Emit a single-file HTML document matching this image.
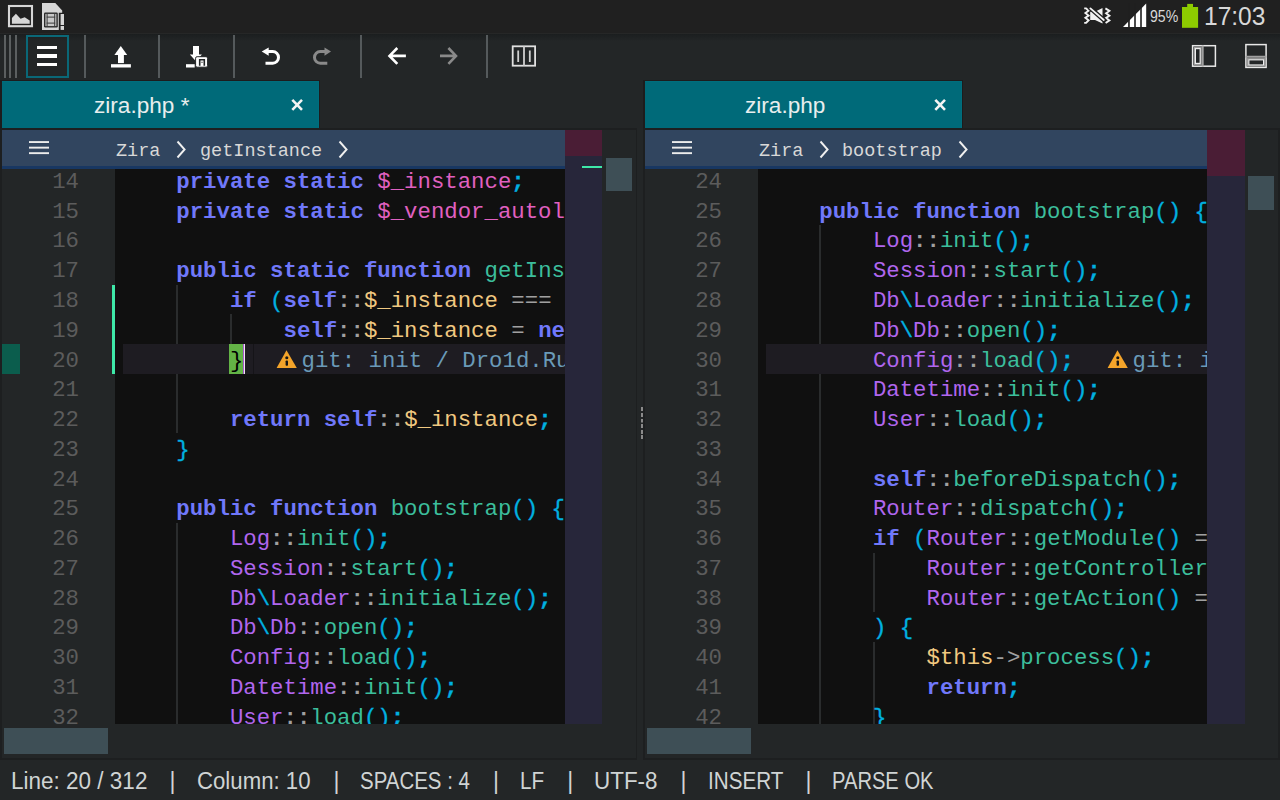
<!DOCTYPE html>
<html><head><meta charset="utf-8">
<style>
*{margin:0;padding:0;box-sizing:border-box}
html,body{width:1280px;height:800px;overflow:hidden;background:#232627;font-family:"Liberation Sans",sans-serif}
.abs{position:absolute}
#sb{position:absolute;left:0;top:0;width:1280px;height:33px;background:#202020}
.sep{position:absolute;top:35px;width:2px;height:43px;background:#555a5c}
.grip{position:absolute;top:35px;width:2px;height:43px;background:#5b5f60}
.tab{position:absolute;top:81px;width:317px;height:47px;background:#006a79;box-shadow:inset -1px 1px 0 #006e7d}
.tabt{position:absolute;font-size:22.6px;line-height:26px;color:#e8eeee;white-space:pre}
.frame{position:absolute;top:128px;height:632px;background:#1d1f20}
.bc{position:absolute;top:130px;height:36px;background:#31455f}
.bcl{position:absolute;top:166px;height:3px;background:#183762}
.bct{position:absolute;font-family:"Liberation Mono",monospace;font-size:18.5px;line-height:22px;color:#d8d8d8;white-space:pre}
.gut{position:absolute;background:#232627}
.code{position:absolute;background:#101010}
.ln{position:absolute;left:7.7px;padding-top:2.4px;height:29.77px;line-height:29.77px;font-family:"Liberation Mono",monospace;font-size:22.33px;white-space:pre;color:#ccc}
.num{position:absolute;right:36px;padding-top:2.4px;height:29.77px;line-height:29.77px;font-family:"Liberation Mono",monospace;font-size:22.33px;white-space:pre;color:#5c5c5c}
.ann{position:absolute;font-family:"Liberation Mono",monospace;font-size:22.33px;line-height:29.77px;white-space:pre;color:#6a9ab8}
.kw{color:#7078fa;font-weight:bold}
.var{color:#e060c0}
.fn{color:#3cbe9c}
.prop{color:#f0c880}
.op{color:#a0a0a0}
.pun{color:#00b0e0;-webkit-text-stroke:0.35px #00b0e0}
.b{font-weight:bold}
.cls{color:#b066ee}
.brk{color:#000}
.guide{position:absolute;width:2px;background:#2a2c2d}
.mm{position:absolute;background:#27263a}
.mmh{position:absolute;background:#4a1d35}
.vs{position:absolute;background:#232627}
.thumb{position:absolute;background:#3e4f56}
.hl{position:absolute;background:#1e1c22}
#st{position:absolute;left:0;top:760px;width:1280px;height:40px;background:#232627}
.stt{position:absolute;top:767px;font-size:23px;line-height:28px;color:#d0d4d4;white-space:pre}
</style></head><body>
<div id="sb"></div>
<div class="abs" style="left:0;top:33px;width:1280px;height:1px;background:#262727"></div>
<div class="abs" style="left:0;top:34px;width:1280px;height:7px;background:linear-gradient(#1b1e1f,#232627)"></div>

<div class="grip" style="left:4px"></div>
<div class="grip" style="left:9px"></div>
<div class="grip" style="left:15px"></div>
<div class="abs" style="left:26px;top:35px;width:43px;height:43px;border:2px solid #0a6878"></div>
<div class="abs" style="left:37px;top:46px;width:20px;height:3px;background:#fff"></div>
<div class="abs" style="left:37px;top:54px;width:20px;height:4px;background:#fff"></div>
<div class="abs" style="left:37px;top:63px;width:20px;height:3px;background:#fff"></div>
<div class="sep" style="left:84px"></div>
<div class="sep" style="left:158px"></div>
<div class="sep" style="left:233px"></div>
<div class="sep" style="left:359.5px"></div>
<div class="sep" style="left:486px"></div>

<div class="abs" style="left:0;top:80px;width:320px;height:48px;background:#1d1c1d"></div>
<div class="abs" style="left:643px;top:80px;width:320px;height:48px;background:#1d1c1d"></div>
<div class="tab" style="left:2px"></div>
<div class="tab" style="left:645px"></div>
<div class="tabt" style="left:94px;top:93px">zira.php *</div>
<div class="tabt" style="left:745px;top:93px">zira.php</div>

<!-- left pane -->
<div class="frame" style="left:0;width:637px"></div>
<div class="gut" style="left:2px;top:130px;width:633.5px;height:627.5px"></div>
<div class="code" style="left:115px;top:169px;width:450px;height:555px"></div>
<div class="bc" style="left:2px;width:563px"></div>
<div class="bcl" style="left:2px;width:563px"></div>
<div class="bct" style="left:116px;top:140.6px">Zira</div>
<div class="bct" style="left:200px;top:140.6px">getInstance</div>
<div class="mmh" style="left:565px;top:130px;width:37px;height:26px"></div>
<div class="mm" style="left:565px;top:156px;width:37px;height:568px"></div>
<div class="thumb" style="left:606px;top:158px;width:26px;height:33px"></div>
<div class="abs" style="left:582px;top:166px;width:20px;height:2px;background:#3ee8a8"></div>
<div class="thumb" style="left:4px;top:728px;width:104px;height:26px"></div>

<!-- right pane -->
<div class="frame" style="left:643px;width:637px"></div>
<div class="gut" style="left:645px;top:130px;width:633px;height:627.5px"></div>
<div class="code" style="left:758px;top:169px;width:449px;height:555px"></div>
<div class="bc" style="left:645px;width:562px"></div>
<div class="bcl" style="left:645px;width:562px"></div>
<div class="bct" style="left:759px;top:140.6px">Zira</div>
<div class="bct" style="left:842px;top:140.6px">bootstrap</div>
<div class="mmh" style="left:1207px;top:130px;width:38px;height:46px"></div>
<div class="mm" style="left:1207px;top:176px;width:38px;height:548px"></div>
<div class="thumb" style="left:1248px;top:176px;width:26px;height:34px"></div>
<div class="thumb" style="left:647px;top:728px;width:104px;height:26px"></div>

<!-- left code -->
<div class="abs" style="left:0;top:169px;width:565px;height:555px;overflow:hidden">
 <div class="abs" style="left:0;top:-169px;width:565px;height:800px">
  <div class="abs" style="left:2px;top:344.12px;width:18px;height:29.77px;background:#0b5d4d"></div>
  <div class="abs" style="left:112px;top:284.58px;width:3px;height:89.31px;background:#3ee8a8"></div>
  <div class="guide" style="left:176px;top:284.58px;height:148.85px"></div>
  <div class="guide" style="left:230px;top:314.35px;height:29.77px"></div>
  <div class="guide" style="left:176px;top:522.74px;height:201.26px"></div>
  <div class="hl" style="left:123px;top:344.12px;width:442px;height:29.77px"></div>
  <div class="abs" style="left:228.9px;top:344.12px;width:14.2px;height:29.77px;background:#63b346"></div>
  <div class="abs" style="left:243.1px;top:344.12px;width:1.3px;height:29.77px;background:#a855d0"></div>
  <div class="abs" style="left:244.4px;top:344.12px;width:0.9px;height:29.77px;background:#f0e8f0"></div>
  <div class="abs" style="left:253.2px;top:344.12px;width:0.9px;height:29.77px;background:#151418"></div>
  <div class="abs" style="left:0;top:0;width:115px;height:800px">
<div class="num" style="top:165.50px">14</div>
<div class="num" style="top:195.27px">15</div>
<div class="num" style="top:225.04px">16</div>
<div class="num" style="top:254.81px">17</div>
<div class="num" style="top:284.58px">18</div>
<div class="num" style="top:314.35px">19</div>
<div class="num" style="top:344.12px">20</div>
<div class="num" style="top:373.89px">21</div>
<div class="num" style="top:403.66px">22</div>
<div class="num" style="top:433.43px">23</div>
<div class="num" style="top:463.20px">24</div>
<div class="num" style="top:492.97px">25</div>
<div class="num" style="top:522.74px">26</div>
<div class="num" style="top:552.51px">27</div>
<div class="num" style="top:582.28px">28</div>
<div class="num" style="top:612.05px">29</div>
<div class="num" style="top:641.82px">30</div>
<div class="num" style="top:671.59px">31</div>
<div class="num" style="top:701.36px">32</div>
  </div>
  <div class="abs" style="left:115px;top:0;width:450px;height:800px">
<div class="ln" style="top:165.50px">    <span class="kw">private</span> <span class="kw">static</span> <span class="var">$_instance</span><span class="pun"><b class="b">;</b></span></div>
<div class="ln" style="top:195.27px">    <span class="kw">private</span> <span class="kw">static</span> <span class="var">$_vendor_autoloader</span><span class="pun"><b class="b">;</b></span></div>
<div class="ln" style="top:254.81px">    <span class="kw">public</span> <span class="kw">static</span> <span class="kw">function</span> <span class="fn">getInstance</span><span class="pun">()</span></div>
<div class="ln" style="top:284.58px">        <span class="kw">if</span> <span class="pun">(</span><span class="kw">self</span><span class="op b">::</span><span class="prop">$_instance</span> <span class="op">===</span> <span class="kw">null</span><span class="pun">)</span></div>
<div class="ln" style="top:314.35px">            <span class="kw">self</span><span class="op b">::</span><span class="prop">$_instance</span> <span class="op">=</span> <span class="kw">new</span> <span class="kw">self</span><span class="pun">()<b class="b">;</b></span></div>
<div class="ln" style="top:344.12px">        <span class="brk">}</span></div>
<div class="ln" style="top:403.66px">        <span class="kw">return</span> <span class="kw">self</span><span class="op b">::</span><span class="prop">$_instance</span><span class="pun"><b class="b">;</b></span></div>
<div class="ln" style="top:433.43px">    <span class="pun">}</span></div>
<div class="ln" style="top:492.97px">    <span class="kw">public</span> <span class="kw">function</span> <span class="fn">bootstrap</span><span class="pun">()</span> <span class="pun">{</span></div>
<div class="ln" style="top:522.74px">        <span class="cls">Log</span><span class="op b">::</span><span class="fn">init</span><span class="pun">()<b class="b">;</b></span></div>
<div class="ln" style="top:552.51px">        <span class="cls">Session</span><span class="op b">::</span><span class="fn">start</span><span class="pun">()<b class="b">;</b></span></div>
<div class="ln" style="top:582.28px">        <span class="cls">Db</span><span class="pun">\</span><span class="cls">Loader</span><span class="op b">::</span><span class="fn">initialize</span><span class="pun">()<b class="b">;</b></span></div>
<div class="ln" style="top:612.05px">        <span class="cls">Db</span><span class="pun">\</span><span class="cls">Db</span><span class="op b">::</span><span class="fn">open</span><span class="pun">()<b class="b">;</b></span></div>
<div class="ln" style="top:641.82px">        <span class="cls">Config</span><span class="op b">::</span><span class="fn">load</span><span class="pun">()<b class="b">;</b></span></div>
<div class="ln" style="top:671.59px">        <span class="cls">Datetime</span><span class="op b">::</span><span class="fn">init</span><span class="pun">()<b class="b">;</b></span></div>
<div class="ln" style="top:701.36px">        <span class="cls">User</span><span class="op b">::</span><span class="fn">load</span><span class="pun">()<b class="b">;</b></span></div>
  </div>
  <svg class="abs" style="left:276px;top:350px" width="22" height="19" viewBox="0 0 22 19">
<path d="M10.5,0.25 L20.8,17.9 L0.6,17.9 Z" fill="#f4a42a"/>
<circle cx="10.8" cy="7.75" r="1.55" fill="#151515"/>
<rect x="9.6" y="10.4" width="2.4" height="5.3" rx="0.8" fill="#151515"/>
</svg>
  <div class="ann" style="left:301.5px;top:346.52px">git: init / Dro1d.Ru</div>
 </div>
</div>

<!-- right code -->
<div class="abs" style="left:643px;top:169px;width:564px;height:555px;overflow:hidden">
 <div class="abs" style="left:-643px;top:-169px;width:1280px;height:800px">
  <div class="guide" style="left:819px;top:225.04px;height:498.96px"></div>
  <div class="guide" style="left:873px;top:552.51px;height:59.54px"></div>
  <div class="guide" style="left:873px;top:641.82px;height:82.18px"></div>
  <div class="hl" style="left:766px;top:344.12px;width:441px;height:29.77px"></div>
  <div class="abs" style="left:643px;top:0;width:115px;height:800px">
<div class="num" style="top:165.50px">24</div>
<div class="num" style="top:195.27px">25</div>
<div class="num" style="top:225.04px">26</div>
<div class="num" style="top:254.81px">27</div>
<div class="num" style="top:284.58px">28</div>
<div class="num" style="top:314.35px">29</div>
<div class="num" style="top:344.12px">30</div>
<div class="num" style="top:373.89px">31</div>
<div class="num" style="top:403.66px">32</div>
<div class="num" style="top:433.43px">33</div>
<div class="num" style="top:463.20px">34</div>
<div class="num" style="top:492.97px">35</div>
<div class="num" style="top:522.74px">36</div>
<div class="num" style="top:552.51px">37</div>
<div class="num" style="top:582.28px">38</div>
<div class="num" style="top:612.05px">39</div>
<div class="num" style="top:641.82px">40</div>
<div class="num" style="top:671.59px">41</div>
<div class="num" style="top:701.36px">42</div>
  </div>
  <div class="abs" style="left:758px;top:0;width:449px;height:800px">
<div class="ln" style="top:195.27px">    <span class="kw">public</span> <span class="kw">function</span> <span class="fn">bootstrap</span><span class="pun">()</span> <span class="pun">{</span></div>
<div class="ln" style="top:225.04px">        <span class="cls">Log</span><span class="op b">::</span><span class="fn">init</span><span class="pun">()<b class="b">;</b></span></div>
<div class="ln" style="top:254.81px">        <span class="cls">Session</span><span class="op b">::</span><span class="fn">start</span><span class="pun">()<b class="b">;</b></span></div>
<div class="ln" style="top:284.58px">        <span class="cls">Db</span><span class="pun">\</span><span class="cls">Loader</span><span class="op b">::</span><span class="fn">initialize</span><span class="pun">()<b class="b">;</b></span></div>
<div class="ln" style="top:314.35px">        <span class="cls">Db</span><span class="pun">\</span><span class="cls">Db</span><span class="op b">::</span><span class="fn">open</span><span class="pun">()<b class="b">;</b></span></div>
<div class="ln" style="top:344.12px">        <span class="cls">Config</span><span class="op b">::</span><span class="fn">load</span><span class="pun">()<b class="b">;</b></span></div>
<div class="ln" style="top:373.89px">        <span class="cls">Datetime</span><span class="op b">::</span><span class="fn">init</span><span class="pun">()<b class="b">;</b></span></div>
<div class="ln" style="top:403.66px">        <span class="cls">User</span><span class="op b">::</span><span class="fn">load</span><span class="pun">()<b class="b">;</b></span></div>
<div class="ln" style="top:463.20px">        <span class="kw">self</span><span class="op b">::</span><span class="fn">beforeDispatch</span><span class="pun">()<b class="b">;</b></span></div>
<div class="ln" style="top:492.97px">        <span class="cls">Router</span><span class="op b">::</span><span class="fn">dispatch</span><span class="pun">()<b class="b">;</b></span></div>
<div class="ln" style="top:522.74px">        <span class="kw">if</span> <span class="pun">(</span><span class="cls">Router</span><span class="op b">::</span><span class="fn">getModule</span><span class="pun">()</span> <span class="op">===</span></div>
<div class="ln" style="top:552.51px">            <span class="cls">Router</span><span class="op b">::</span><span class="fn">getControllerName</span><span class="pun">()</span></div>
<div class="ln" style="top:582.28px">            <span class="cls">Router</span><span class="op b">::</span><span class="fn">getAction</span><span class="pun">()</span> <span class="op">===</span></div>
<div class="ln" style="top:612.05px">        <span class="pun">)</span> <span class="pun">{</span></div>
<div class="ln" style="top:641.82px">            <span class="prop">$this</span><span class="op">-&gt;</span><span class="fn">process</span><span class="pun">()<b class="b">;</b></span></div>
<div class="ln" style="top:671.59px">            <span class="kw">return</span><span class="pun"><b class="b">;</b></span></div>
<div class="ln" style="top:701.36px">        <span class="pun">}</span></div>
  </div>
  <svg class="abs" style="left:1107.2px;top:350.2px" width="22" height="19" viewBox="0 0 22 19">
<path d="M10.5,0.25 L20.8,17.9 L0.6,17.9 Z" fill="#f4a42a"/>
<circle cx="10.8" cy="7.75" r="1.55" fill="#151515"/>
<rect x="9.6" y="10.4" width="2.4" height="5.3" rx="0.8" fill="#151515"/>
</svg>
  <div class="ann" style="left:1132.5px;top:346.52px">git: init / Dro1d.Ru</div>
 </div>
</div>


<svg class="abs" style="left:0;top:0" width="1280" height="800" viewBox="0 0 1280 800">
 <!-- status bar left icons -->
 <rect x="9" y="6" width="23" height="20.2" fill="none" stroke="#d6d6d6" stroke-width="2.1"/>
 <polygon points="11.9,18.1 15.9,13.75 20.6,18.75 24.7,17.2 29.7,20.6 29.7,23.75 11.9,23.75" fill="#d6d6d6"/>
 <path d="M42,3 L55.3,3 L62.2,10.6 L62.2,12.8 L58.8,12.8 L58.8,30 L42,30 Z" fill="#d6d6d6"/>
 <rect x="44" y="12.5" width="13.8" height="15" rx="1.2" fill="#2a2a2a"/>
 <rect x="45.4" y="13.9" width="11" height="12.2" fill="#c8c8c8"/>
 <rect x="46.6" y="13.9" width="1" height="12.2" fill="#3a3a3a"/>
 <rect x="54.2" y="13.9" width="1" height="12.2" fill="#3a3a3a"/>
 <rect x="46.6" y="16.6" width="8.6" height="1" fill="#3a3a3a"/>
 <rect x="46.6" y="22.6" width="8.6" height="1" fill="#3a3a3a"/>
 <rect x="60.6" y="14" width="3.4" height="11" fill="#d6d6d6"/>
 <rect x="60.6" y="26" width="3.4" height="3.9" fill="#d6d6d6"/>
 <!-- status right -->
 <g fill="none" stroke="#f2f2f2" stroke-width="1.9" stroke-linejoin="miter">
  <polyline points="1084.2,8.4 1086.1,8.4 1088.6,10.7 1085.4,13.1 1088.6,15.6 1085.4,17.75 1088.6,20.25 1086.1,22.9 1084.2,22.9"/>
  <polyline points="1105.4,8.4 1109.4,10.9 1106.1,13.3 1109.4,15.7 1106.1,17.9 1109.4,20.4 1105.6,23"/>
 </g>
 <polygon points="1090.2,11.8 1095,11.8 1102.5,8 1102.5,23.4 1095,19.9 1090.2,19.9" fill="#f2f2f2"/>
 <path d="M1089.8,7.6 L1104.2,20.4" stroke="#202020" stroke-width="4.6"/>
 <path d="M1090.4,8.4 L1103.8,20" stroke="#f2f2f2" stroke-width="1.9" stroke-linecap="round"/>
 <polygon points="1123,27 1146.2,3.6 1146.2,27" fill="#ffffff"/>
 <rect x="1128.1" y="3" width="1.7" height="25" fill="#202020"/>
 <rect x="1134.2" y="3" width="1.6" height="25" fill="#202020"/>
 <rect x="1140.2" y="3" width="1.6" height="25" fill="#202020"/>
 <rect x="1182" y="7" width="16.1" height="20.8" fill="#8dcc00"/>
 <rect x="1187.2" y="3.9" width="5.8" height="3.2" fill="#8dcc00"/>
 <!-- toolbar: upload -->
 <polygon points="120.8,46 127.2,55 114.4,55" fill="#fff"/>
 <rect x="118" y="54.5" width="5.9" height="8.6" fill="#fff"/>
 <rect x="111" y="64.2" width="19.9" height="3.3" fill="#fff"/>
 <!-- save as -->
 <rect x="193" y="46" width="6" height="9.5" fill="#fff"/>
 <polygon points="189.9,54.4 201.9,54.4 195.9,61.2" fill="#fff"/>
 <rect x="186" y="64.2" width="8.7" height="3.3" fill="#fff"/>
 <rect x="195.6" y="56.7" width="12" height="10.5" rx="1.5" fill="#fff" stroke="#232627" stroke-width="1"/>
 <path d="M199.7,65.8 L199.7,59.8 L204.3,59.8 L204.3,65.8" fill="none" stroke="#232627" stroke-width="1.6"/>
 <path d="M200.5,62.3 L203.5,62.3" fill="none" stroke="#8a8a8a" stroke-width="1.2"/>
 <!-- undo -->
 <polygon points="261.7,51.6 268.7,47.4 268.7,55.8" fill="#fff"/>
 <path d="M268,51.6 L272.7,51.6 A5.8,5.8 0 0 1 272.7,63.2 L265.5,63.2" fill="none" stroke="#fff" stroke-width="3"/>
 <!-- redo -->
 <polygon points="331,51.6 324.5,47.4 324.5,55.8" fill="#8a8a8a"/>
 <path d="M325,51.6 L320.3,51.6 A5.8,5.8 0 0 0 320.3,63.2 L327.3,63.2" fill="none" stroke="#8a8a8a" stroke-width="3"/>
 <!-- back / fwd -->
 <path d="M389.5,55.9 L405.9,55.9 M397.3,48 L389.5,55.9 L397.3,63.9" fill="none" stroke="#fff" stroke-width="2.6"/>
 <path d="M440,55.9 L456,55.9 M448.4,48 L456,55.9 L448.4,63.9" fill="none" stroke="#8a8a8a" stroke-width="2.6"/>
 <!-- split -->
 <rect x="512.7" y="46.3" width="22.4" height="19.4" fill="none" stroke="#e0e0e0" stroke-width="1.8"/>
 <path d="M524,46 L524,66 M518.2,50.6 L518.2,61.9 M529.8,50.6 L529.8,61.9" fill="none" stroke="#d0d0d0" stroke-width="1.8"/>
 <!-- right icons -->
 <rect x="1192.6" y="45.7" width="22.8" height="20.5" fill="none" stroke="#e8e8e8" stroke-width="1.5"/>
 <path d="M1202.7,45.5 L1202.7,66.5" stroke="#a0a0a0" stroke-width="2"/>
 <rect x="1194.5" y="47.5" width="6.6" height="17" fill="none" stroke="#9a9a9a" stroke-width="1.2"/>
 <rect x="1195.4" y="48.6" width="4.8" height="14.8" fill="none" stroke="#eeeeee" stroke-width="1.2"/>
 <rect x="1245.9" y="44.6" width="20.2" height="22.8" fill="none" stroke="#e8e8e8" stroke-width="1.5"/>
 <path d="M1245.5,56.75 L1266.5,56.75" stroke="#a0a0a0" stroke-width="2"/>
 <rect x="1247.6" y="58.7" width="17.2" height="7.4" fill="none" stroke="#9a9a9a" stroke-width="1.2"/>
 <rect x="1248.8" y="59.8" width="14.8" height="5.2" fill="none" stroke="#eeeeee" stroke-width="1.2"/>
 <!-- tab close x -->
 <path d="M292.3,99.9 L302,109.9 M302,99.9 L292.3,109.9" stroke="#f4f4f4" stroke-width="2.6"/>
 <path d="M935.3,99.9 L945,109.9 M945,99.9 L935.3,109.9" stroke="#f4f4f4" stroke-width="2.6"/>
 <!-- breadcrumb hamburgers -->
 <g fill="#ececec">
  <rect x="29" y="141.1" width="20" height="1.9"/><rect x="29" y="146.7" width="20" height="1.9"/><rect x="29" y="152.2" width="20" height="1.9"/>
  <rect x="672" y="141.1" width="20" height="1.9"/><rect x="672" y="146.7" width="20" height="1.9"/><rect x="672" y="152.2" width="20" height="1.9"/>
 </g>
 <!-- breadcrumb chevrons -->
 <g fill="none" stroke="#f0f0f0" stroke-width="1.9">
  <path d="M177.5,141.5 L184.6,149.5 L177.5,157.5"/>
  <path d="M339.5,141.5 L346.6,149.5 L339.5,157.5"/>
  <path d="M820.5,141.5 L827.6,149.5 L820.5,157.5"/>
  <path d="M959.5,141.5 L966.6,149.5 L959.5,157.5"/>
 </g>
 <!-- split grip -->
 <g fill="#8a8a8a">
  <rect x="641" y="407" width="2" height="4"/><rect x="641" y="413" width="2" height="4"/><rect x="641" y="419" width="2" height="3.5"/>
  <rect x="641" y="424" width="2" height="4"/><rect x="641" y="430" width="2" height="4"/><rect x="641" y="435" width="2" height="4"/>
 </g>
</svg>


<div class="abs" style="left:1149.7px;top:7.2px;font-size:17px;line-height:20px;color:#d8d8d8;white-space:pre;transform:scaleX(0.83);transform-origin:0 0">95%</div>
<div class="abs" style="left:1204px;top:0.6px;font-size:26px;line-height:30px;color:#d8d8d8;white-space:pre;transform:scaleX(0.944);transform-origin:0 0">17:03</div>

<div id="st"></div>
<div class="stt" style="left:11.02px;transform:scaleX(0.9785);transform-origin:0 0">Line: 20 / 312</div>
<div class="stt" style="left:169.50px">|</div>
<div class="stt" style="left:197.03px;transform:scaleX(0.965);transform-origin:0 0">Column: 10</div>
<div class="stt" style="left:333.50px">|</div>
<div class="stt" style="left:360.36px;transform:scaleX(0.8896);transform-origin:0 0">SPACES : 4</div>
<div class="stt" style="left:493.00px">|</div>
<div class="stt" style="left:520.35px;transform:scaleX(0.899);transform-origin:0 0">LF</div>
<div class="stt" style="left:567.25px">|</div>
<div class="stt" style="left:594.02px;transform:scaleX(0.9757);transform-origin:0 0">UTF-8</div>
<div class="stt" style="left:680.50px">|</div>
<div class="stt" style="left:707.85px;transform:scaleX(0.899);transform-origin:0 0">INSERT</div>
<div class="stt" style="left:805.50px">|</div>
<div class="stt" style="left:832.12px;transform:scaleX(0.876);transform-origin:0 0">PARSE OK</div>
</body></html>
